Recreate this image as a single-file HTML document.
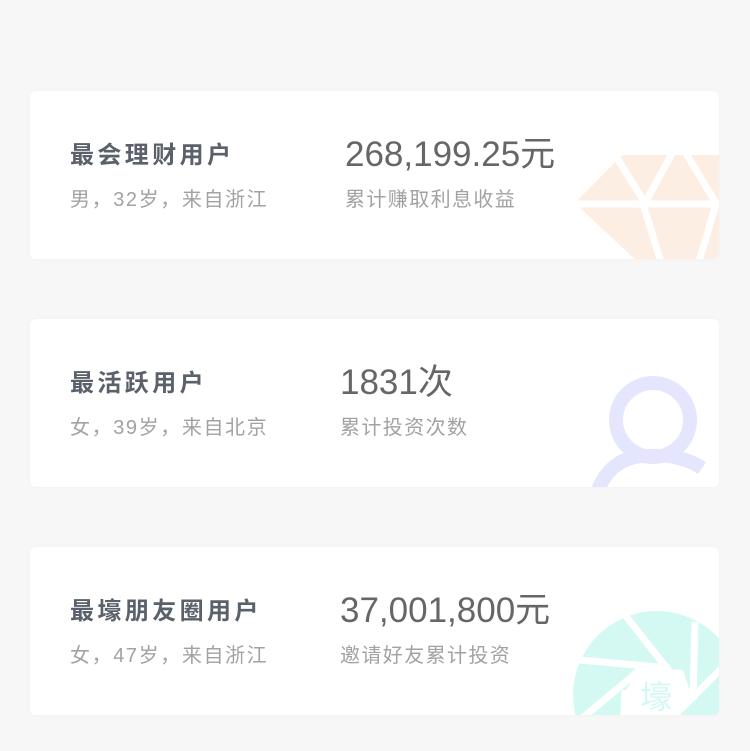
<!DOCTYPE html>
<html><head><meta charset="utf-8"><style>
body{margin:0;width:750px;height:751px;background:#f7f7f7;position:relative;overflow:hidden;font-family:"Liberation Sans","Noto Sans CJK SC",sans-serif;}
.card{position:absolute;left:30px;width:689px;height:168px;background:#fff;border-radius:6px;overflow:hidden;box-shadow:0 0 4px rgba(0,0,0,0.03);}
.t{position:absolute;left:40px;top:50px;font-size:24px;font-weight:bold;color:#5b616b;letter-spacing:3.4px;line-height:30px;white-space:nowrap}
.s{position:absolute;left:40px;top:96px;font-size:20px;color:#a2a2a2;letter-spacing:1.6px;line-height:26px;white-space:nowrap}
.n{position:absolute;top:44px;font-size:35px;color:#666;line-height:40px;white-space:nowrap}
.d{position:absolute;top:96px;font-size:20px;color:#a2a2a2;letter-spacing:1.4px;line-height:26px;white-space:nowrap}
svg{position:absolute;left:0;top:0}
</style></head><body>
<div class="card" style="top:91px">
<svg width="689" height="168" viewBox="30 91 689 168">
<polygon points="622,155 800,155 850,203 710,330 575,203" fill="#fdeee3"/>
<g stroke="#fff" stroke-width="7" fill="none">
<line x1="612" y1="150" x2="645" y2="203"/>
<line x1="674" y1="150" x2="645" y2="203"/>
<line x1="684" y1="150" x2="716" y2="203"/>
<line x1="560" y1="204" x2="760" y2="204"/>
<line x1="643" y1="204" x2="665" y2="275"/>
<line x1="716" y1="204" x2="695" y2="275"/>
</g>
</svg>
<div class="t">最会理财用户</div><div class="s">男，32岁，来自浙江</div>
<div class="n" style="left:315px">268,199.25元</div><div class="d" style="left:315px">累计赚取利息收益</div>
</div>
<div class="card" style="top:319px">
<svg width="689" height="168" viewBox="30 319 689 168">
<circle cx="653" cy="420" r="37" fill="none" stroke="#e3e6fc" stroke-width="14"/>
<path d="M598,490 Q610,460 640,456 L670,456 Q690,460 702,468" fill="none" stroke="#e3e6fc" stroke-width="14"/>
</svg>
<div class="t">最活跃用户</div><div class="s">女，39岁，来自北京</div>
<div class="n" style="left:310px">1831次</div><div class="d" style="left:310px">累计投资次数</div>
</div>
<div class="card" style="top:547px">
<svg width="689" height="168" viewBox="30 547 689 168">
<circle cx="657" cy="695" r="84" fill="#d4f9f3"/>
<g stroke="#fff" stroke-width="7">
<line x1="625" y1="615" x2="680" y2="685"/>
<line x1="580" y1="660" x2="670" y2="668"/>
<line x1="580" y1="720" x2="640" y2="670"/>
<line x1="625" y1="690" x2="622" y2="760"/>
<line x1="695" y1="622" x2="693" y2="700"/>
<line x1="730" y1="660" x2="680" y2="710"/>
</g>
<polygon points="640,668 683,670 693,700 680,715 626,720 626,690" fill="#fff"/>
<text x="640" y="708" font-size="32" fill="#d4f9f3" font-family="Noto Sans CJK SC,sans-serif">壕</text>
</svg>
<div class="t">最壕朋友圈用户</div><div class="s">女，47岁，来自浙江</div>
<div class="n" style="left:310px">37,001,800元</div><div class="d" style="left:310px">邀请好友累计投资</div>
</div>
</body></html>
